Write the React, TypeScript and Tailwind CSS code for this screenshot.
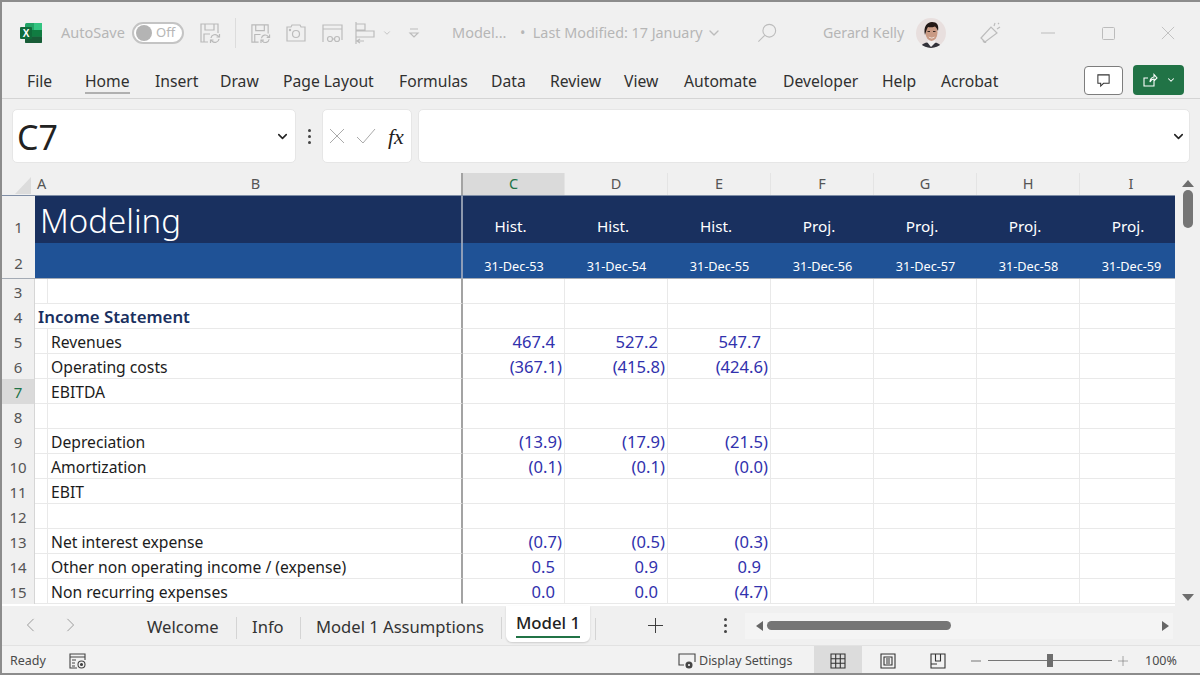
import React from "react";
import { ChevronDown } from "lucide-react";

const font = { fontFamily: '"Noto Sans", "Open Sans", sans-serif' };

function SaveSync({ className = "" }: { className?: string }) {
  return (
    <svg viewBox="0 0 22 22" className={className} fill="none" stroke="#b9b9b9" strokeWidth="1.2">
      <path d="M9 20H2V2h17v9" />
      <path d="M6 2v6h9V2M5 20v-8h6" />
      <path d="M12 16a4 4 0 0 1 7-2l1.500 1M20 17a4 4 0 0 1-7 2l-1.500-1" />
      <path d="M20.500 12v3h-3M11.500 21v-3h3" />
    </svg>
  );
}

function Cross({ size, color, className = "" }: { size: number; color: string; className?: string }) {
  return (
    <svg viewBox="0 0 16 16" width={size} height={size} className={className} fill="none" stroke={color} strokeWidth="1">
      <path d="M1 1l14 14M15 1L1 15" />
    </svg>
  );
}

function PlusMark({ size, color, className = "" }: { size: number; color: string; className?: string }) {
  return (
    <svg viewBox="0 0 16 16" width={size} height={size} className={className} fill="none" stroke={color} strokeWidth="1">
      <path d="M8 0v16M0 8h16" />
    </svg>
  );
}

function Arrow({ left }: { left?: boolean }) {
  return (
    <svg viewBox="0 0 10 16" width="9" height="14" fill="none" stroke="#999" strokeWidth="1.100">
      <path d={left ? "M8.500 1L1.500 8l7 7" : "M1.500 1l7 7-7 7"} />
    </svg>
  );
}

function ExcelLogo() {
  return (
    <svg viewBox="0 0 22 22" className="w-[22px] h-[22px]">
      <rect x="5" y="1" width="17" height="20" rx="1.500" fill="#21a366" />
      <rect x="14" y="1" width="8" height="7" fill="#33c481" />
      <rect x="5" y="8" width="9" height="6.500" fill="#107c41" />
      <rect x="14" y="8" width="8" height="6.500" fill="#107c41" />
      <rect x="5" y="14.500" width="17" height="6.500" rx="1" fill="#185c37" />
      <rect x="0" y="5" width="12" height="12" rx="1" fill="#0f6b3a" />
      <text x="6" y="14.500" textAnchor="middle" fontSize="10" fontWeight="700" fill="#fff" fontFamily="Liberation Sans, sans-serif">X</text>
    </svg>
  );
}

function Avatar() {
  return (
    <svg viewBox="0 0 30 30" className="w-[30px] h-[30px]">
      <defs>
        <clipPath id="av"><circle cx="15" cy="15" r="15" /></clipPath>
      </defs>
      <g clipPath="url(#av)">
        <rect width="30" height="30" fill="#e8dfde" />
        <path d="M4 30c1-4 6-6 11-6s10 2 11 6z" fill="#33323a" />
        <path d="M11 24l4 5 5-5-2-2h-5z" fill="#f1eeee" />
        <ellipse cx="15.500" cy="14.500" rx="6" ry="8.500" fill="#c99a84" />
        <path d="M9 17c-2-8 2-13 7-13s7 3 6 9c-1-2-2-4-3-4.500-3 1-5 1-7 .5-1.500 2-2 5-3 8z" fill="#231815" />
        <path d="M12.500 18.500c2 1.500 4.500 1.500 6.500 0-1 2.500-5.500 2.500-6.500 0z" fill="#f5eeea" />
        <rect x="11.500" y="13" width="2.500" height="1" fill="#3a2a24" />
        <rect x="17" y="13" width="2.500" height="1" fill="#3a2a24" />
      </g>
    </svg>
  );
}

function TitleBar() {
  const c = "#bcbcbc";
  return (
    <div className="h-[60px] shrink-0 flex items-center pt-[2px] text-[#b6b6b6] text-[14.500px]">
      <div className="ml-[18px]"><ExcelLogo /></div>
      <span className="ml-[19px] w-[63px] whitespace-nowrap">AutoSave</span>
      <div className="ml-[8px] w-[52px] h-[22px] rounded-full border-2 border-[#c4c4c4] bg-white flex items-center pl-[2px]">
        <div className="w-[16px] h-[16px] rounded-full bg-[#b4b4b4]" />
        <span className="ml-[4px] text-[13px]">Off</span>
      </div>
      <SaveSync className="ml-[15px] w-[22px] h-[22px]" />
      <div className="ml-[14px] w-px h-[30px] bg-[#dcdcdc]" />
      <SaveSync className="ml-[14px] w-[21px] h-[21px]" />
      <svg viewBox="0 0 22 22" className="ml-[14px] w-[22px] h-[22px]" fill="none" stroke={c} strokeWidth="1.200">
        <path d="M2 5h4l1-2h8l1 2h4v14H2z" />
        <circle cx="11" cy="12" r="3.500" />
        <circle cx="5" cy="8" r=".6" />
      </svg>
      <svg viewBox="0 0 22 22" className="ml-[14px] w-[22px] h-[22px]" fill="none" stroke={c} strokeWidth="1.200">
        <path d="M2 20V3h19v15M2 7h19" />
        <circle cx="9" cy="17" r="2.500" />
        <circle cx="16" cy="17" r="2.500" />
        <path d="M11.500 17h2" />
      </svg>
      <svg viewBox="0 0 22 24" className="ml-[11px] w-[22px] h-[24px]" fill="none" stroke={c} strokeWidth="1.200">
        <path d="M2 1v22M2 3h9v6H2M2 10h18v6H2M10 20H3l3-2M3 20l3 2" />
      </svg>
      <ChevronDown size={10} color={c} strokeWidth={2} className="ml-[6px]" />
      <svg viewBox="0 0 12 12" className="ml-[16px] w-[12px] h-[12px]" fill="none" stroke={c} strokeWidth="1.200">
        <path d="M2 2h8M2 6l4 4 4-4z" />
      </svg>
      <span className="ml-[32px] w-[55px] whitespace-nowrap">Model...</span>
      <span className="ml-[13px] w-[181px] whitespace-nowrap text-[14.350px]">•&nbsp; Last Modified: 17 January</span>
      <ChevronDown size={16} color={c} strokeWidth={2} className="ml-[5px]" />
      <svg viewBox="0 0 22 22" className="ml-[35px] w-[20px] h-[20px]" fill="none" stroke={c} strokeWidth="1.200">
        <circle cx="13.500" cy="8.500" r="7" />
        <path d="M8.500 13.500L1.500 20.500" />
      </svg>
      <span className="ml-[46px] w-[82px] whitespace-nowrap text-[14.200px]">Gerard Kelly</span>
      <div className="ml-[11px]"><Avatar /></div>
      <svg viewBox="0 0 24 24" className="ml-[32px] w-[24px] h-[24px]" fill="none" stroke={c} strokeWidth="1.200">
        <path d="M3 17L13 6l6 6-12 9-4-4zM8 21c-1 1-3 0-3-2" />
        <path d="M16 5l1-3M19 8l3-2M20 3l1-1" />
      </svg>
      <svg viewBox="0 0 14 2" className="ml-[39px] w-[14px] h-[2px]" stroke={c} strokeWidth="1"><path d="M0 1h14" /></svg>
      <svg viewBox="0 0 13 13" className="ml-[47px] w-[13px] h-[13px]" fill="none" stroke={c} strokeWidth="1"><rect x=".5" y=".5" width="12" height="12" rx="1" /></svg>
      <Cross size={14} color={c} className="ml-[46px]" />
    </div>
  );
}

const tabs: [string, string][] = [
  ["File", "w-[58px]"], ["Home", "w-[70px]"], ["Insert", "w-[65px]"], ["Draw", "w-[63px]"], ["Page Layout", "w-[116px]"],
  ["Formulas", "w-[92px]"], ["Data", "w-[59px]"], ["Review", "w-[74px]"], ["View", "w-[60px]"], ["Automate", "w-[99px]"],
  ["Developer", "w-[99px]"], ["Help", "w-[59px]"], ["Acrobat", "w-[60px]"],
];

function RibbonTabs() {
  return (
    <div className="h-[37px] shrink-0 flex items-center pl-[25px] text-[15.700px] text-[#303030] border-b border-[#d4d4d4]">
      {tabs.map(([t, w]) => (
        <div key={t} className={`${w} shrink-0 pt-[4px]`}>
          <span className="relative whitespace-nowrap">
            {t}
            {t === "Home" && <span className="absolute left-0 right-0 bottom-[-2px] h-[2px] bg-[#b0b0b0]" />}
          </span>
        </div>
      ))}
      <div className="ml-auto w-[39px] h-[29px] bg-white border border-[#7d7d7d] rounded-[4px] flex items-center justify-center">
        <svg viewBox="0 0 16 16" className="w-[15px] h-[15px]" fill="none" stroke="#333" strokeWidth="1.100">
          <path d="M2 2h12v9H8l-3 3v-3H2z" />
        </svg>
      </div>
      <div className="ml-[10px] mr-[16px] w-[51px] h-[30px] bg-[#217346] rounded-[4px] flex items-center justify-center gap-[8px]">
        <svg viewBox="0 0 16 16" className="w-[16px] h-[16px]" fill="none" stroke="#fff" strokeWidth="1.100">
          <path d="M12 9v5H2V6h4M8 10c0-3 2-5 4-5V2.500L15 6l-3 3V7c-2 0-3 1-4 3z" />
        </svg>
        <ChevronDown size={10} color="#fff" strokeWidth={2.500} />
      </div>
    </div>
  );
}

function FormulaBar() {
  return (
    <div className="h-[74px] shrink-0 flex items-center pl-[10px] pr-[10px] text-[#222]">
      <div className="w-[284px] h-[54px] bg-white rounded-[5px] border border-[#e6e6e6] flex items-center pl-[4px] pr-[5px]">
        <span className="text-[34px] leading-none pt-[2px]">C7</span>
        <ChevronDown size={15} strokeWidth={2.500} className="ml-auto" color="#222" />
      </div>
      <div className="w-[26px] flex flex-col items-center gap-[3px]">
        <span className="w-[3px] h-[3px] rounded-full bg-[#444]" />
        <span className="w-[3px] h-[3px] rounded-full bg-[#444]" />
        <span className="w-[3px] h-[3px] rounded-full bg-[#444]" />
      </div>
      <div className="w-[90px] h-[54px] bg-white rounded-[5px] border border-[#e6e6e6] flex items-center pl-[6px]">
        <Cross size={16} color="#aaa" />
        <svg viewBox="0 0 20 16" className="ml-[11px] w-[20px] h-[16px]" fill="none" stroke="#aaa" strokeWidth="1"><path d="M1 9l6 6L19 1" /></svg>
        <span className="ml-[12px] text-[22px] italic" style={{ fontFamily: '"Liberation Serif", serif' }}>fx</span>
      </div>
      <div className="ml-[6px] flex-1 h-[54px] bg-white rounded-[5px] border border-[#e6e6e6] flex items-center justify-end pr-[3px]">
        <ChevronDown size={15} strokeWidth={2.500} color="#222" />
      </div>
    </div>
  );
}

const rows: [number, string, string, string, string][] = [
  [5, "Revenues", "467.4", "527.2", "547.7"],
  [6, "Operating costs", "(367.1)", "(415.8)", "(424.6)"],
  [7, "EBITDA", "", "", ""],
  [8, "", "", "", ""],
  [9, "Depreciation", "(13.9)", "(17.9)", "(21.5)"],
  [10, "Amortization", "(0.1)", "(0.1)", "(0.0)"],
  [11, "EBIT", "", "", ""],
  [12, "", "", "", ""],
  [13, "Net interest expense", "(0.7)", "(0.5)", "(0.3)"],
  [14, "Other non operating income / (expense)", "0.5", "0.9", "0.9"],
  [15, "Non recurring expenses", "0.0", "0.0", "(4.7)"],
];

const colGrid = "grid grid-cols-[33px_13px_415px_102px_103px_103px_103px_103px_103px_103px]";
const bodyRow = "grid grid-cols-[33px_13px_415px_102px_103px_103px_103px_103px_103px_103px] grid-rows-[25px] h-[25px]";
const headers = ["Hist.", "Hist.", "Hist.", "Proj.", "Proj.", "Proj.", "Proj."];
const dates = ["53", "54", "55", "56", "57", "58", "59"];
const colLetters = ["C", "D", "E", "F", "G", "H", "I"];

function RowHead({ n, active }: { n: number; active?: boolean }) {
  return (
    <div className={`flex items-center justify-center pt-[1px] text-[15px] leading-[20px] border-r border-[#d6d6d6] ${active ? "bg-[#dadada] text-[#217346]" : "bg-[#f0f0f0] text-[#555]"}`}>
      {n}
    </div>
  );
}

function Num({ v }: { v: string }) {
  const paren = v.startsWith("(");
  return (
    <div className={`flex items-center justify-end pt-[2px] border-r border-b border-[#e9e9e9] text-[16.600px] leading-[20px] text-[#3131ad] ${paren ? "pr-[2px]" : "pr-[9px]"}`}>
      {v}
    </div>
  );
}

function Blank() {
  return <div className="border-r border-b border-[#e9e9e9]" />;
}

function Sheet() {
  return (
    <div className="flex-1 min-h-0 flex overflow-hidden">
      <div className="w-[1173px] shrink-0 overflow-hidden bg-white">
        <div className={`${colGrid} h-[23px] bg-[#f0f0f0] text-[14.500px] text-[#555] border-b border-[#7f8ea6]`}>
          <div className="flex items-end justify-end pr-[4px] pb-[1px]">
            <svg viewBox="0 0 16 17" className="w-[16px] h-[17px]"><path d="M16 0v17H0z" fill="#dcdcdc" /></svg>
          </div>
          <div className="flex items-center pl-[2px]">A</div>
          <div className="flex items-center justify-center border-r-2 border-[#a3a3a3] pl-[2px]">B</div>
          {colLetters.map((l) => (
            <div key={l} className={`flex items-center justify-center border-r border-[#e4e4e4] ${l === "C" ? "bg-[#dadada] text-[#217346]" : ""}`}>{l}</div>
          ))}
        </div>
        <div className={`${colGrid} h-[47px] text-white`}>
          <div className="bg-[#f0f0f0] flex items-end justify-center pb-[5px] text-[15px] text-[#555]">1</div>
          <div className="col-span-2 bg-[#19305f] border-r-2 border-[#8d98ad] flex items-center pl-[5px] pt-[2px] text-[33px] font-light leading-none">Modeling</div>
          {headers.map((h, i) => (
            <div key={i} className="bg-[#19305f] flex items-end justify-center pr-[7px] pb-[5px] text-[15.300px]">{h}</div>
          ))}
        </div>
        <div className={`${colGrid} h-[36px] text-white border-b border-[#a4abb5]`}>
          <div className="bg-[#f0f0f0] flex items-end justify-center pb-[4px] text-[15px] text-[#555]">2</div>
          <div className="col-span-2 bg-[#1f5296] border-r-2 border-[#8d9db8]" />
          {dates.map((d) => (
            <div key={d} className="bg-[#1f5296] flex items-end justify-center pb-[2px] text-[12.700px]">31-Dec-{d}</div>
          ))}
        </div>
        <div className={bodyRow}>
          <RowHead n={3} />
          <Blank />
          <div className="border-r-2 border-b border-r-[#a3a3a3] border-b-[#e9e9e9]" />
          {colLetters.map((l) => <Blank key={l} />)}
        </div>
        <div className={bodyRow}>
          <RowHead n={4} />
          <div className="col-span-2 flex items-center pl-[3px] pt-[1px] border-r-2 border-b border-r-[#a3a3a3] border-b-[#e9e9e9] text-[16.800px] leading-[20px] font-semibold text-[#19305f] whitespace-nowrap">Income Statement</div>
          {colLetters.map((l) => <Blank key={l} />)}
        </div>
        {rows.map(([n, label, c, d, e]) => (
          <div key={n} className={bodyRow}>
            <RowHead n={n} active={n === 7} />
            <Blank />
            <div className="flex items-center pl-[3px] pt-[2px] border-r-2 border-b border-r-[#a3a3a3] border-b-[#e9e9e9] text-[15.700px] leading-[20px] text-[#1c1c1c] whitespace-nowrap">{label}</div>
            {c ? <Num v={c} /> : <Blank />}
            {d ? <Num v={d} /> : <Blank />}
            {e ? <Num v={e} /> : <Blank />}
            <Blank /><Blank /><Blank /><Blank />
          </div>
        ))}
      </div>
      <div className="flex-1 flex flex-col items-center pt-[7px] pb-[5px]">
        <div className="w-0 h-0 border-l-[6px] border-r-[6px] border-b-[7px] border-l-transparent border-r-transparent border-b-[#6e6e6e]" />
        <div className="mt-[3px] w-[10px] h-[38px] rounded-full bg-[#757575]" />
        <div className="mt-auto w-0 h-0 border-l-[6px] border-r-[6px] border-t-[7px] border-l-transparent border-r-transparent border-t-[#6e6e6e]" />
      </div>
    </div>
  );
}

function SheetTabs() {
  const sep = <div className="mt-[6px] w-px h-[22px] bg-[#d4d4d4]" />;
  return (
    <div className="h-[39px] shrink-0 flex items-start text-[16.600px] text-[#333]">
      <div className="h-[37px] flex items-center">
        <div className="ml-[24px]"><Arrow left /></div>
        <div className="ml-[31px]"><Arrow /></div>
        <span className="ml-[72px] w-[72px] pt-[6px] whitespace-nowrap">Welcome</span>
        <div className="ml-[17px]">{sep}</div>
        <span className="ml-[15px] w-[32px] pt-[6px] whitespace-nowrap">Info</span>
        <div className="ml-[16px]">{sep}</div>
        <span className="ml-[15px] w-[169px] pt-[6px] whitespace-nowrap">Model 1 Assumptions</span>
        <div className="ml-[16px]">{sep}</div>
      </div>
      <div className="ml-[4px] w-[84px] h-[36px] bg-white rounded-b-[6px] flex justify-center pt-[3px] shadow-[0_1px_2px_rgba(0,0,0,0.15)]">
        <span className="h-[29px] pt-[2px] font-medium text-[16.800px] text-[#222] border-b-2 border-[#217346] leading-[24px] whitespace-nowrap">Model 1</span>
      </div>
      <div className="h-[37px] flex items-center flex-1 pt-[2px]">
        <div className="ml-[5px]">{sep}</div>
        <PlusMark size={15} color="#333" className="ml-[52px]" />
        <div className="ml-[61px] flex flex-col gap-[3px]">
          <span className="w-[3px] h-[3px] rounded-full bg-[#444]" />
          <span className="w-[3px] h-[3px] rounded-full bg-[#444]" />
          <span className="w-[3px] h-[3px] rounded-full bg-[#444]" />
        </div>
        <div className="ml-[18px] w-[428px] h-[26px] bg-[#f4f4f4] flex items-center pl-[11px]">
          <div className="w-0 h-0 border-t-[5px] border-b-[5px] border-r-[7px] border-t-transparent border-b-transparent border-r-[#666]" />
          <div className="ml-[4px] w-[184px] h-[9px] rounded-full bg-[#757575]" />
          <div className="ml-auto mr-[4px] w-0 h-0 border-t-[5px] border-b-[5px] border-l-[7px] border-t-transparent border-b-transparent border-l-[#666]" />
        </div>
      </div>
    </div>
  );
}

function StatusBar() {
  return (
    <div className="h-[28px] shrink-0 flex items-center text-[12.500px] text-[#4a4a4a] border-t border-[#e2e2e2] bg-[#f2f2f2]">
      <span className="ml-[8px] w-[36px] pt-[3px]">Ready</span>
      <svg viewBox="0 0 18 18" className="ml-[23px] mt-[2px] w-[18px] h-[18px]" fill="none" stroke="#444" strokeWidth="1.100">
        <path d="M8 16H1V2h15v6M1 5h15M3 8h4M3 11h3M3 14h3" />
        <circle cx="12.500" cy="12.500" r="3.500" />
        <circle cx="12.500" cy="12.500" r="1" fill="#444" />
      </svg>
      <svg viewBox="0 0 18 18" className="ml-[591px] mt-[2px] w-[18px] h-[18px]" fill="none" stroke="#444" strokeWidth="1.100">
        <path d="M6 13H1V2h16v8" />
        <circle cx="11" cy="13" r="3" fill="#444" />
        <circle cx="11" cy="13" r="1" fill="#fff" stroke="none" />
      </svg>
      <span className="ml-[3px] w-[92px] pt-[3px] whitespace-nowrap">Display Settings</span>
      <div className="ml-[23px] w-[48px] self-stretch bg-[#dcdcdc] flex items-center justify-center pt-[2px]">
        <svg viewBox="0 0 16 16" className="w-[16px] h-[16px]" fill="none" stroke="#333" strokeWidth="1.100">
          <path d="M1 1h14v14H1zM1 5.700h14M1 10.300h14M5.700 1v14M10.300 1v14" />
        </svg>
      </div>
      <svg viewBox="0 0 16 16" className="ml-[18px] mt-[2px] w-[16px] h-[16px]" fill="none" stroke="#333" strokeWidth="1.100">
        <path d="M1 1h14v14H1zM4 4h8v8H4zM6 6h4M6 8h4M6 10h4" />
      </svg>
      <svg viewBox="0 0 16 16" className="ml-[34px] mt-[2px] w-[16px] h-[16px]" fill="none" stroke="#333" strokeWidth="1.100">
        <path d="M1 1h14v14H1zM5.500 1v7h5V1M1 11h6" />
      </svg>
      <svg viewBox="0 0 10 2" className="ml-[25px] mt-[2px] w-[10px] h-[2px]" stroke="#777" strokeWidth="1"><path d="M0 1h10" /></svg>
      <div className="ml-[7px] mt-[2px] w-[124px] h-px bg-[#777] relative">
        <div className="absolute left-[59px] top-[-6px] w-[6px] h-[13px] bg-[#6e6e6e]" />
      </div>
      <PlusMark size={10} color="#777" className="ml-[6px] mt-[2px]" />
      <span className="ml-[17px] pt-[3px] whitespace-nowrap">100%</span>
    </div>
  );
}

export default function App() {
  return (
    <div style={font} className="w-[1200px] h-[675px] flex flex-col bg-[#f0f0f0] border-t-2 border-l-2 border-b-2 border-[#8c8c8c] overflow-hidden">
      <TitleBar />
      <RibbonTabs />
      <FormulaBar />
      <Sheet />
      <SheetTabs />
      <StatusBar />
    </div>
  );
}
